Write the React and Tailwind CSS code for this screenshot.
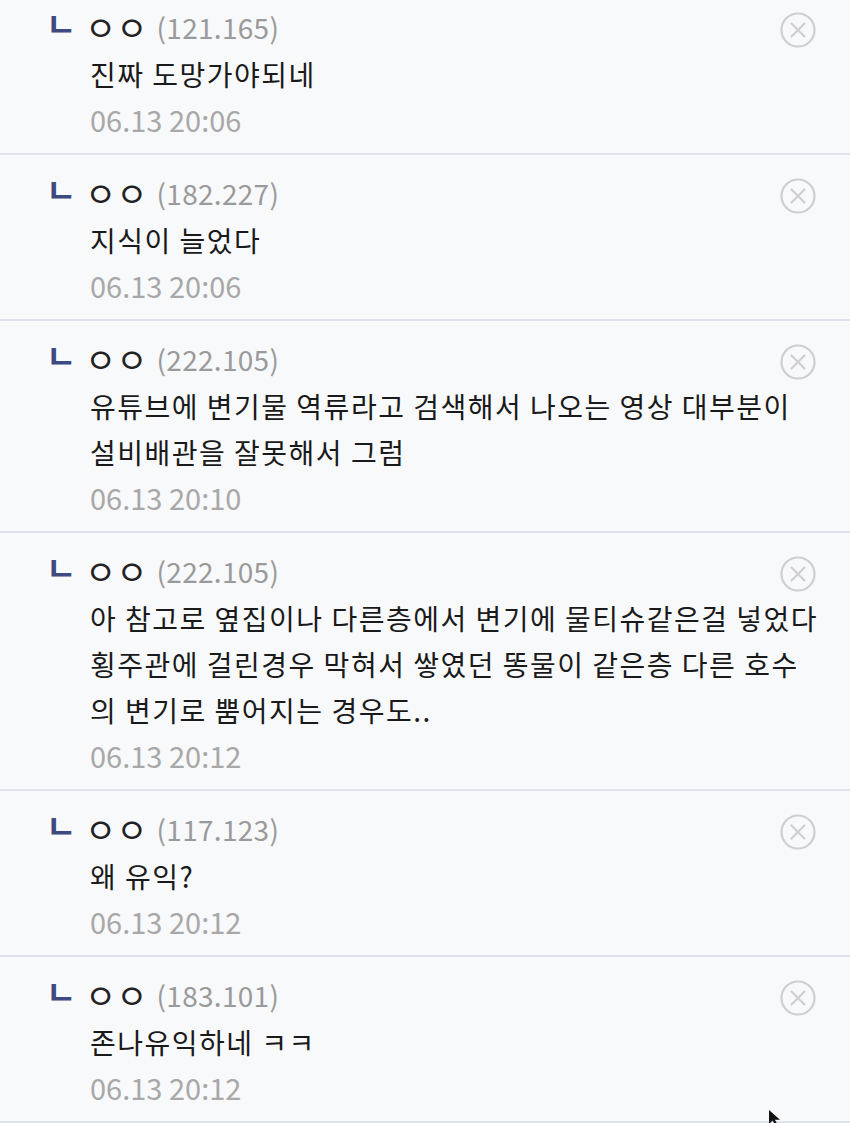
import React from 'react';

const comments = [
  { ip: '121.165', lines: ['진짜 도망가야되네'], date: '06.13 20:06' },
  { ip: '182.227', lines: ['지식이 늘었다'], date: '06.13 20:06' },
  {
    ip: '222.105',
    lines: ['유튜브에 변기물 역류라고 검색해서 나오는 영상 대부분이', '설비배관을 잘못해서 그럼'],
    date: '06.13 20:10',
  },
  {
    ip: '222.105',
    lines: [
      '아 참고로 옆집이나 다른층에서 변기에 물티슈같은걸 넣었다',
      '횡주관에 걸린경우 막혀서 쌓였던 똥물이 같은층 다른 호수',
      '의 변기로 뿜어지는 경우도..',
    ],
    date: '06.13 20:12',
  },
  { ip: '117.123', lines: ['왜 유익?'], date: '06.13 20:12' },
  { ip: '183.101', lines: ['존나유익하네 ㅋㅋ'], date: '06.13 20:12' },
];

const CloseIcon = () => (
  <svg width="38" height="38" viewBox="0 0 38 38" fill="none">
    <circle cx="19" cy="19" r="16.5" stroke="#cfcfd2" strokeWidth="2.2" />
    <path d="M12.5 12.5 L25.5 25.5 M25.5 12.5 L12.5 25.5" stroke="#cfcfd2" strokeWidth="2.2" strokeLinecap="round" />
  </svg>
);

const Comment = ({ c }) => (
  <div className="flex border-b-2 border-[#dfe2ec] pt-[14px] pb-[12px]">
    <div className="w-[90px] shrink-0 pl-[46px] h-[40px] flex items-center">
      <span className="text-[33px] font-bold text-[#3c4a7f] leading-[40px]">ㄴ</span>
    </div>
    <div className="flex-1 min-w-0">
      <div className="h-[48px] flex items-center gap-[9px]">
        <span className="text-[34px] leading-[48px] text-[#222] -ml-[5px]">ㅇㅇ</span>
        <span className="text-[28px] text-[#9a9a9a] tracking-[0.3px]">({c.ip})</span>
      </div>
      {c.lines.map((l, i) => (
        <p key={i} className="text-[28px] leading-[46px] text-[#1a1a1a] tracking-[1.5px] whitespace-nowrap">{l}</p>
      ))}
      <p className="text-[29px] leading-[44px] text-[#a8a8a8]">{c.date}</p>
    </div>
    <div className="w-[72px] shrink-0 pt-[8px] pl-[1px]">
      <CloseIcon />
    </div>
  </div>
);

export default function App() {
  return (
    <div
      className="relative w-[850px] h-[1123px] overflow-hidden bg-[#f8f9fb]"
      style={{ fontFamily: '"Noto Sans CJK KR", "Noto Sans", sans-serif' }}
    >
      <div className="-mt-[11px]">
        {comments.map((c, i) => (
          <Comment key={i} c={c} />
        ))}
      </div>
      <svg className="absolute left-[768px] top-[1110px]" width="14" height="16" viewBox="0 0 14 16">
        <path d="M1 0 L1 14 L4.5 10.5 L8 16 L10 15 L6.8 9.8 L12 9.8 Z" fill="#111" />
      </svg>
    </div>
  );
}
